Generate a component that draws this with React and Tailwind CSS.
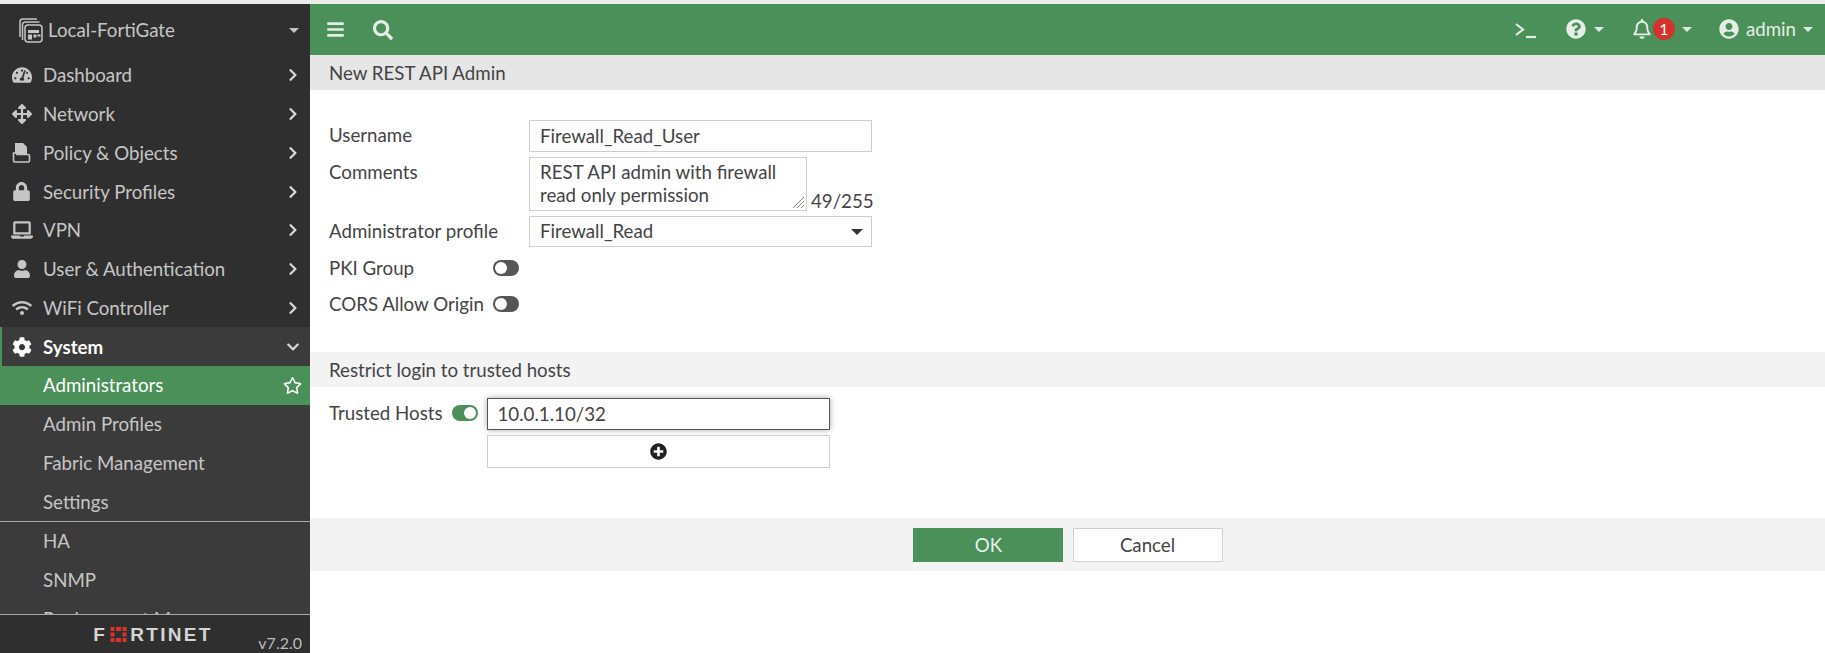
import React from "react";
import {
  FaTachometerAlt,
  FaArrowsAlt,
  FaLock,
  FaUser,
  FaWifi,
  FaCog,
  FaLaptop,
  FaRegStar,
  FaChevronRight,
  FaChevronDown,
  FaBars,
  FaSearch,
  FaQuestionCircle,
  FaRegBell,
  FaUserCircle,
  FaPlusCircle,
} from "react-icons/fa";

const PolicyIcon = () => (
  <svg width="21" height="21" viewBox="0 0 21 21" fill="currentColor">
    <path d="M4 1h8l4 4v7H4z" />
    <path d="M2.5 11v7.5a1.5 1.5 0 0 0 1.5 1.5h13a1.5 1.5 0 0 0 1.5-1.5V14a1.5 1.5 0 0 0-1.5-1.5H6V11z" fill="none" stroke="currentColor" strokeWidth="1.6" />
  </svg>
);

const DeviceIcon = () => (
  <svg width="27" height="27" viewBox="0 0 27 27" fill="none" stroke="currentColor" strokeWidth="1.5">
    <path d="M3 20V5a3 3 0 0 1 3-3h14" />
    <path d="M5.5 23V8a3 3 0 0 1 3-3h14" />
    <rect x="8" y="8" width="17" height="17" rx="3" />
    <path d="M11 13h11v3h-11z" fill="currentColor" stroke="none" />
    <path d="M11 17.500h4v5h-4zM16.500 17.500h3v3h-3zM20.500 17.500h3v2h-3z" fill="currentColor" stroke="none" />
  </svg>
);

const FortinetMark = () => (
  <svg width="17" height="15" viewBox="0 0 16 15" fill="#d9332a" className="mx-[3px]">
    <path d="M0 0h4v4H0zM5.500 0h5v4h-5zM12 0h4v4h-4zM0 5.500h4v4H0zM12 5.500h4v4h-4zM0 11h4v4H0zM5.500 11h5v4h-5zM12 11h4v4h-4z" />
  </svg>
);

const Caret = ({ className = "border-t-[#dfe9e1]" }) => (
  <span className={`inline-block w-0 h-0 border-x-[5px] border-x-transparent border-t-[5px] ${className}`} />
);

const Toggle = ({ on }) =>
  on ? (
    <span className="flex justify-end items-center w-[26px] h-[16px] rounded-full bg-[#4a9058] pr-[2px]">
      <span className="w-[12px] h-[12px] rounded-full bg-white" />
    </span>
  ) : (
    <span className="flex items-center w-[26px] h-[16px] rounded-full bg-[#555] pl-[2px]">
      <span className="w-[12px] h-[12px] rounded-full bg-white" />
    </span>
  );

const topItems = [
  { label: "Dashboard", icon: <FaTachometerAlt size={20} /> },
  { label: "Network", icon: <FaArrowsAlt size={20} /> },
  { label: "Policy & Objects", icon: <PolicyIcon /> },
  { label: "Security Profiles", icon: <FaLock size={19} /> },
  { label: "VPN", icon: <FaLaptop size={22} /> },
  { label: "User & Authentication", icon: <FaUser size={18} /> },
  { label: "WiFi Controller", icon: <FaWifi size={20} /> },
];

function NavRow({ icon, label, right, className = "" }) {
  return (
    <div className={`flex items-center h-[38.75px] shrink-0 ${className}`}>
      <span className="flex justify-center w-[43px] shrink-0">{icon}</span>
      <span className="flex-1 whitespace-nowrap">{label}</span>
      {right}
    </div>
  );
}

function Sidebar() {
  return (
    <aside className="flex flex-col w-[310px] shrink-0 h-full bg-[#2f2f2f] text-[#c6c6c6] text-[18.700px]">
      <div className="flex items-center h-[51px] shrink-0 pt-[1px] pl-[17px] pr-[11px]">
        <DeviceIcon />
        <span className="flex-1 ml-[4px]">Local-FortiGate</span>
        <Caret className="border-t-[#c6c6c6]" />
      </div>
      <div className="flex-1 flex flex-col overflow-hidden mt-[1px]">
        {topItems.map((item) => (
          <NavRow
            key={item.label}
            icon={item.icon}
            label={item.label}
            right={<FaChevronRight size={14} className="mr-[10px] text-[#d8d8d8]" />}
          />
        ))}
        <div className="flex-1 bg-[#3b3b3b] flex flex-col overflow-hidden">
          <NavRow
            icon={<FaCog size={20} />}
            label="System"
            className="text-white font-bold shadow-[inset_2px_0_0_#4a9058]"
            right={<FaChevronDown size={14} className="mr-[10px] text-[#d8d8d8]" />}
          />
          <NavRow
            label="Administrators"
            className="bg-[#4a9058] text-white"
            right={<FaRegStar size={19} className="mr-[8px]" />}
          />
          <NavRow label="Admin Profiles" />
          <NavRow label="Fabric Management" />
          <NavRow label="Settings" />
          <div className="border-t border-[#a8a8a8]">
            <NavRow label="HA" />
            <NavRow label="SNMP" />
            <NavRow label="Replacement Messages" />
          </div>
        </div>
      </div>
      <div className="relative flex items-center justify-center h-[39px] shrink-0 bg-[#2f2f2f] border-t border-[#a8a8a8]">
        <span className="flex items-center mr-[4px] mt-[1px] text-[#d5d5d5] font-['Liberation_Sans',sans-serif] font-bold text-[19px] tracking-[2.300px] leading-none">
          F<FortinetMark />RTINET
        </span>
        <span className="absolute right-[8px] bottom-[-2px] text-[16px] text-[#bcbcbc]">v7.2.0</span>
      </div>
    </aside>
  );
}

function Topbar() {
  return (
    <header className="flex items-center h-[51px] shrink-0 bg-[#4a9058] text-[#e4eee6]">
      <FaBars size={19} className="ml-[16px]" />
      <FaSearch size={20} className="ml-[28px]" />
      <div className="flex-1" />
      <div className="flex items-center text-[18.700px] pr-[12px]">
        <span className="flex items-end h-[20px] w-[22px] font-bold text-[19px] leading-none">
          <svg width="22" height="18" viewBox="0 0 22 18" fill="none" stroke="currentColor" strokeWidth="2.200">
            <path d="M1 3l7 5.500L1 14" />
            <path d="M11 16h10" />
          </svg>
        </span>
        <FaQuestionCircle size={20} className="ml-[29px]" />
        <span className="ml-[8px] flex"><Caret /></span>
        <FaRegBell size={20} className="ml-[28px]" />
        <span className="flex items-center justify-center w-[22px] h-[22px] rounded-full bg-[#d5322b] text-white text-[16px] ml-[1px]">1</span>
        <span className="ml-[7px] flex"><Caret /></span>
        <FaUserCircle size={20} className="ml-[27px]" />
        <span className="ml-[7px]">admin</span>
        <span className="ml-[7px] flex"><Caret /></span>
      </div>
    </header>
  );
}

function FormRow({ label, labelClass = "", children, className = "" }) {
  return (
    <div className={`flex ${className}`}>
      <span className={`w-[200px] shrink-0 whitespace-nowrap ${labelClass}`}>{label}</span>
      {children}
    </div>
  );
}

function NewAdminForm() {
  return (
    <div className="text-[18.700px] text-[#444]">
      <div className="flex items-center h-[35px] bg-[#e6e6e6] pl-[19px] pt-[1px]">New REST API Admin</div>
      <div className="pl-[19px] pt-[30px] h-[262px]">
        <FormRow label="Username" labelClass="-mt-[2px]" className="items-center h-[32px]">
          <div className="flex items-center w-[343px] h-[32px] border border-[#cfcfcf] pl-[10px]">Firewall_Read_User</div>
        </FormRow>
        <FormRow label="Comments" labelClass="pt-[1px]" className="mt-[5px] h-[54px]">
          <div className="relative w-[278px] h-[54px] border border-[#cfcfcf] pl-[10px] pt-[3px] leading-[23px]">
            REST API admin with firewall
            <br />
            read only permission
            <svg width="14" height="14" viewBox="0 0 14 14" className="absolute right-[1px] bottom-[1px]" stroke="#888" strokeWidth="1">
              <path d="M13 2L2 13M13 6L6 13M13 10L10 13" />
            </svg>
          </div>
          <span className="self-end ml-[4px] leading-[20px]">49/255</span>
        </FormRow>
        <FormRow label="Administrator profile" className="items-center mt-[5px] h-[31px]">
          <div className="flex items-center justify-between w-[343px] h-[31px] border border-[#cfcfcf] pl-[10px] pr-[8px]">
            Firewall_Read
            <span className="border-x-[6px] border-x-transparent border-t-[6px] border-t-[#333]" />
          </div>
        </FormRow>
        <div className="flex items-center justify-between w-[190px] h-[20px] mt-[11px]">
          PKI Group <Toggle />
        </div>
        <div className="flex items-center justify-between w-[190px] h-[20px] mt-[16px]">
          CORS Allow Origin <Toggle />
        </div>
      </div>
      <div className="flex items-center h-[35px] bg-[#f3f3f3] pl-[19px] pt-[1px]">Restrict login to trusted hosts</div>
      <div className="flex pl-[19px] pt-[11px] h-[131px]">
        <div className="flex items-center h-[32px] -mt-[1px]">
          Trusted Hosts
          <span className="ml-[9px]"><Toggle on /></span>
        </div>
        <div className="ml-[9px]">
          <div className="flex items-center w-[343px] h-[32px] border border-[#555] shadow-[0_0_6px_rgba(0,0,0,0.35)] pl-[10px]">10.0.1.10/32</div>
          <div className="flex items-center justify-center w-[343px] h-[33px] mt-[5px] border border-[#cfcfcf] text-[#222]">
            <FaPlusCircle size={17} />
          </div>
        </div>
      </div>
      <div className="flex items-center justify-center gap-[10px] h-[53px] bg-[#f3f3f3]">
        <button className="w-[150px] h-[34px] bg-[#4a9058] text-[#e8f1ea] pl-[2px] pt-[1px]">OK</button>
        <button className="w-[150px] h-[34px] bg-white border border-[#cfcfcf] pt-[1px]">Cancel</button>
      </div>
    </div>
  );
}

export default function App() {
  return (
    <div className="h-[653px] w-[1825px] overflow-hidden bg-white font-['Lato',sans-serif] flex flex-col">
      <div className="h-[4px] shrink-0 bg-[#ececec]" />
      <div className="flex flex-1 min-h-0">
        <Sidebar />
        <main className="flex-1 flex flex-col min-w-0">
          <Topbar />
          <NewAdminForm />
        </main>
      </div>
    </div>
  );
}
